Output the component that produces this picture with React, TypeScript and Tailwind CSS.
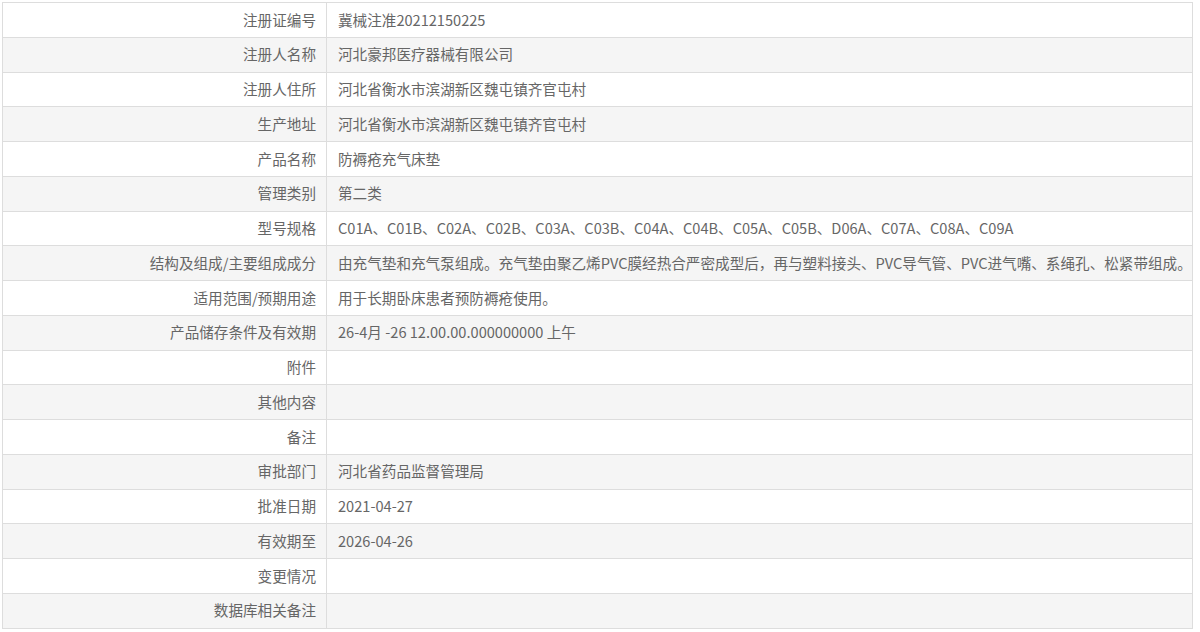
const rows: [string, string][] = [
  ["注册证编号", "冀械注准20212150225"],
  ["注册人名称", "河北豪邦医疗器械有限公司"],
  ["注册人住所", "河北省衡水市滨湖新区魏屯镇齐官屯村"],
  ["生产地址", "河北省衡水市滨湖新区魏屯镇齐官屯村"],
  ["产品名称", "防褥疮充气床垫"],
  ["管理类别", "第二类"],
  ["型号规格", "C01A、C01B、C02A、C02B、C03A、C03B、C04A、C04B、C05A、C05B、D06A、C07A、C08A、C09A"],
  ["结构及组成/主要组成成分", "由充气垫和充气泵组成。充气垫由聚乙烯PVC膜经热合严密成型后，再与塑料接头、PVC导气管、PVC进气嘴、系绳孔、松紧带组成。"],
  ["适用范围/预期用途", "用于长期卧床患者预防褥疮使用。"],
  ["产品储存条件及有效期", "26-4月 -26 12.00.00.000000000 上午"],
  ["附件", ""],
  ["其他内容", ""],
  ["备注", ""],
  ["审批部门", "河北省药品监督管理局"],
  ["批准日期", "2021-04-27"],
  ["有效期至", "2026-04-26"],
  ["变更情况", ""],
  ["数据库相关备注", ""],
]

export default function App() {
  return (
    <div className="h-[632px] w-[1200px] overflow-hidden bg-white pl-[2px] pt-[2px] font-['Noto_Sans_CJK_SC',sans-serif] text-[14.6px] text-[#666]">
      <table className="w-[1191px] table-fixed border-collapse border border-[#ddd]">
        <colgroup>
          <col className="w-[324px]" />
          <col />
        </colgroup>
        <tbody>
          {rows.map(([label, value], i) => (
            <tr key={label} className={i % 2 === 1 ? "bg-[#f5f5f5]" : "bg-white"}>
              <td className="h-[34.75px] border border-[#ddd] pr-[10px] text-right leading-none">{label}</td>
              <td className="h-[34.75px] whitespace-nowrap border border-[#ddd] pl-[11px] leading-none">{value}</td>
            </tr>
          ))}
        </tbody>
      </table>
    </div>
  )
}
